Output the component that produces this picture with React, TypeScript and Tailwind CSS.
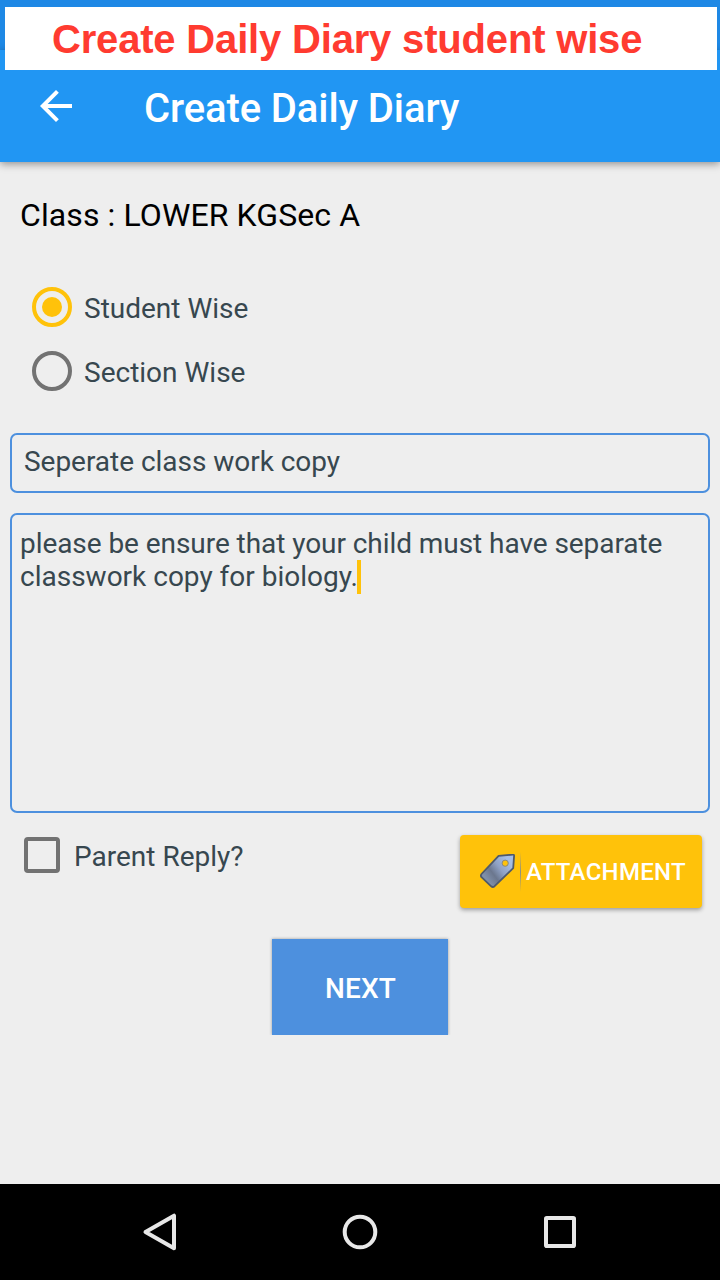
import React from "react";

function RadioOption({ label, checked }: { label: string; checked?: boolean }) {
  return (
    <div role="radio" aria-checked={!!checked} className="flex h-16 items-center gap-3 pl-8">
      <span
        className={
          checked
            ? "flex size-10 items-center justify-center rounded-full border-4 border-[#ffc20a]"
            : "flex size-10 items-center justify-center rounded-full border-4 border-[#727272]"
        }
      >
        {checked && <span className="size-5 rounded-full bg-[#ffc20a]" />}
      </span>
      <span className="pt-0.5 text-[28px] leading-[33px]">{label}</span>
    </div>
  );
}

function TagIcon() {
  return (
    <svg width="36" height="36" viewBox="0 0.8 36 36">
      <defs>
        <linearGradient id="tag" x1="28" y1="7" x2="5" y2="24" gradientUnits="userSpaceOnUse">
          <stop offset="0" stopColor="#a6bee6" />
          <stop offset="0.4" stopColor="#8fa1c4" />
          <stop offset="0.7" stopColor="#6b778e" />
          <stop offset="1" stopColor="#8090aa" />
        </linearGradient>
      </defs>
      <path
        d="M18.6 2.6 L32.8 1.4 Q34.2 1.3 34.1 2.7 L33.2 15 L14.6 33 Q12.8 34.5 11.2 33.1 L1.5 24 Q0.3 22.4 1.5 20.8 Z"
        fill="url(#tag)"
        stroke="#4f5a6b"
        strokeWidth="1.8"
        strokeLinejoin="round"
      />
      <circle cx="25.2" cy="10" r="3.1" fill="#ffc20a" stroke="#7d8288" strokeWidth="0.9" />
    </svg>
  );
}

export default function App() {
  return (
    <div className="relative flex h-[1280px] w-[720px] flex-col overflow-hidden bg-[#eeeeee] font-[Roboto,sans-serif] text-[#37474f]">
      <div className="h-[50px] shrink-0 bg-[#1e88e5]" />
      <header className="flex h-28 shrink-0 items-center bg-[#2196f3] pl-10 text-white shadow-[0_2px_8px_rgba(0,0,0,0.4)]">
        <svg width="32" height="32" viewBox="4 4 16 16" fill="currentColor">
          <path d="M20 11H7.83l5.59-5.59L12 4l-8 8 8 8 1.41-1.41L7.83 13H20v-2z" />
        </svg>
        <h1 className="pt-1.5 pl-[72px] text-[40px] leading-[48px] font-medium tracking-[-0.1px]">Create Daily Diary</h1>
      </header>
      <div className="absolute top-[7px] left-[5px] flex h-[63px] w-[712px] items-center bg-white pl-[47px]">
        <span className="font-['Liberation_Sans',sans-serif] text-[40px] leading-[46px] font-bold tracking-[-0.18px] whitespace-nowrap text-[#ff3b30]">
          Create Daily Diary student wise
        </span>
      </div>

      <main className="flex min-h-0 grow flex-col">
        <p className="px-5 pt-[34px] text-[32px] leading-[38px] tracking-[0.1px] text-black">Class : LOWER KGSec A</p>
        <div role="radiogroup" className="mt-[41px] flex flex-col">
          <RadioOption label="Student Wise" checked />
          <RadioOption label="Section Wise" />
        </div>
        <div className="mx-2.5 mt-[30px] flex h-[60px] items-start rounded-[7px] border-2 border-[#4d90de] pt-2.5 pl-3 text-[28px] leading-[33px] tracking-[-0.03px]">
          Seperate class work copy
        </div>
        <div className="mx-2.5 mt-5 h-[300px] rounded-[7px] border-2 border-[#4d90de] pt-3 pl-2 text-[28px] leading-[33px]">
          <p className="tracking-[-0.06px]">please be ensure that your child must have separate</p>
          <p className="flex">
            classwork copy for biology.
            <span className="-ml-px h-[34px] w-1 bg-[#ffc20a]" />
          </p>
        </div>

        <div className="flex h-[126px] items-start justify-between pr-[18px] pl-6">
          <div role="checkbox" aria-checked={false} className="mt-6 flex items-center gap-3.5">
            <span className="size-9 rounded-[4px] border-4 border-[#727272]" />
            <span className="pt-0.5 text-[28px] leading-[33px]">Parent Reply?</span>
          </div>
          <button className="mt-[22px] flex h-[73px] w-[242px] items-center rounded-[4px] bg-[#ffc20a] pl-5 text-white shadow-[0_2px_4px_rgba(0,0,0,0.35)]">
            <TagIcon />
            <span className="ml-1 h-10 w-px bg-linear-to-b from-transparent via-[#8b8f86] to-transparent" />
            <span className="pl-[5px] text-[24px] leading-7 font-medium tracking-[0.28px]">ATTACHMENT</span>
          </button>
        </div>
        <button className="flex h-24 w-44 items-center justify-center self-center bg-[#4d90de] pt-0.5 pl-px text-[28px] leading-[33px] font-medium tracking-[0.2px] text-white shadow-[0_0_3px_rgba(0,0,0,0.35)] [clip-path:inset(-3px_-3px_0_-3px)]">
          NEXT
        </button>
      </main>

      <nav className="flex h-24 shrink-0 items-center justify-around bg-black px-[60px]">
        <svg width="40" height="40" viewBox="0 0 40 40" fill="none" stroke="#e8e8e8" strokeWidth="4" strokeLinejoin="round">
          <path d="M5.5 20 34 3.7V36.3Z" />
        </svg>
        <svg width="40" height="40" viewBox="0 0 40 40" fill="none" stroke="#e8e8e8" strokeWidth="4">
          <circle cx="20" cy="20" r="15.3" />
        </svg>
        <svg width="40" height="40" viewBox="0 0 40 40" fill="none" stroke="#e8e8e8" strokeWidth="4" strokeLinejoin="round">
          <rect x="6" y="6" width="28" height="28" rx="0.8" />
        </svg>
      </nav>
    </div>
  );
}
